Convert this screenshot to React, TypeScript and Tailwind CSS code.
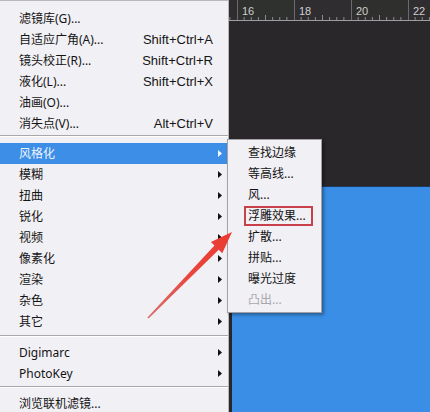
import { ReactNode } from 'react';

interface ItemProps {
  label: ReactNode;
  shortcut?: string;
  sub?: boolean;
  active?: boolean;
}

function Arrow({ light }: { light?: boolean }) {
  return (
    <svg width="4" height="7" viewBox="0 0 4 7">
      <polygon points="0,0 4,3.5 0,7" fill={light ? '#f4f8ff' : '#111'} />
    </svg>
  );
}

function MenuItem({ label, shortcut, sub, active }: ItemProps) {
  return (
    <div
      className={`flex h-[21px] items-center pl-[19px] pr-[6px] ${
        active ? 'bg-[#3c8ee6] text-[#eef4ff]' : 'text-[#141414]'
      }`}
    >
      <span className="flex-1 whitespace-nowrap">{label}</span>
      {shortcut && (
        <span className="whitespace-nowrap font-['Liberation_Sans',sans-serif] text-[13px]">{shortcut}</span>
      )}
      <span className="flex w-[9px] justify-end">{sub && <Arrow light={active} />}</span>
    </div>
  );
}

function Separator({ className }: { className: string }) {
  return (
    <div className={className}>
      <div className="h-px bg-[#a9a7ab]" />
      <div className="h-px bg-white" />
    </div>
  );
}

function Ruler() {
  const majors = [8, 65, 122, 179];
  const labels = ['16', '18', '20', '22'];
  const ticks: number[] = [];
  for (let i = -8; i < 34; i++) ticks.push(8 + i * 7.125);
  return (
    <svg width="201" height="21" viewBox="0 0 201 21" className="block">
      <rect width="201" height="21" fill="#302d31" />
      <rect x="8" width="57" height="19" fill="#2e312e" />
      <rect x="122" width="57" height="19" fill="#2f302e" />
      {ticks.map((x, i) => {
        const k = ((i % 8) + 8) % 8;
        const h = k === 0 ? 0 : k === 4 ? 5 : 3;
        return h ? <line key={i} x1={x} x2={x} y1={20 - h} y2={20} stroke="#8d8a8f" strokeWidth="1" /> : null;
      })}
      {majors.map((x, i) => (
        <g key={x}>
          <line x1={x + 0.5} x2={x + 0.5} y1="0" y2="20" stroke="#6d6a6f" strokeWidth="1" />
          <text x={x + 5} y="15" fontSize="11" fill="#cfcfcf" fontFamily="Liberation Sans, sans-serif">
            {labels[i]}
          </text>
        </g>
      ))}
      <line x1="0" x2="201" y1="20.5" y2="20.5" stroke="#a09da2" strokeWidth="1" />
    </svg>
  );
}

const subItems = ['查找边缘', '等高线...', '风...', '浮雕效果...', '扩散...', '拼贴...', '曝光过度', '凸出...'];

export default function App() {
  return (
    <div className="relative flex h-[412px] w-[430px] overflow-hidden font-['Noto_Sans','Noto_Sans_CJK_SC',sans-serif] text-[12px]">
      <div className="w-[229px] shrink-0 border-r border-t border-[#b9b7bb] bg-[#f1f0f4] pt-[7px]">
        <MenuItem label="滤镜库(G)..." />
        <MenuItem label="自适应广角(A)..." shortcut="Shift+Ctrl+A" />
        <MenuItem label="镜头校正(R)..." shortcut="Shift+Ctrl+R" />
        <MenuItem label="液化(L)..." shortcut="Shift+Ctrl+X" />
        <MenuItem label="油画(O)..." />
        <MenuItem label="消失点(V)..." shortcut="Alt+Ctrl+V" />
        <Separator className="pt-px pb-[6px]" />
        <MenuItem label="风格化" sub active />
        <MenuItem label="模糊" sub />
        <MenuItem label="扭曲" sub />
        <MenuItem label="锐化" sub />
        <MenuItem label="视频" sub />
        <MenuItem label="像素化" sub />
        <MenuItem label="渲染" sub />
        <MenuItem label="杂色" sub />
        <MenuItem label="其它" sub />
        <Separator className="pt-[3px] pb-[5px]" />
        <MenuItem label="Digimarc" sub />
        <MenuItem label="PhotoKey" sub />
        <Separator className="pt-[2px] pb-[5px]" />
        <MenuItem label="浏览联机滤镜..." />
      </div>

      <div className="flex flex-1 flex-col bg-[#2a272a]">
        <Ruler />
        <div className="h-[165px]" />
        <div className="ml-[3px] flex-1 border-t border-[#1d3b5e] bg-[#3a8ee6]" />
      </div>

      <div className="absolute left-[227px] top-[139px] w-[95px] border border-[#a3a1a5] bg-[#f1f0f4] py-[2px] shadow-[2px_2px_3px_rgba(0,0,0,0.35)]">
        {subItems.map((s, i) => (
          <div key={s} className="flex h-[21px] items-center pl-[20px]">
            {i === 3 ? (
              <span className="-ml-[4px] flex h-[20px] w-[69px] items-center border-2 border-[#c8404a] pl-[2px] text-[#141414] whitespace-nowrap">
                {s}
              </span>
            ) : (
              <span className={`whitespace-nowrap ${i === 7 ? 'text-[#a9a7ab]' : 'text-[#141414]'}`}>{s}</span>
            )}
          </div>
        ))}
      </div>

      <svg className="pointer-events-none absolute left-0 top-0" width="430" height="412" viewBox="0 0 430 412">
        <defs>
          <linearGradient id="arr" x1="148" y1="318" x2="232" y2="232" gradientUnits="userSpaceOnUse">
            <stop offset="0" stopColor="#d9706e" />
            <stop offset="0.5" stopColor="#e8463f" />
            <stop offset="1" stopColor="#ea3a30" />
          </linearGradient>
        </defs>
        <polygon
          points="147.4,317.4 214.5,245.6 210.9,242.1 232,232 222.3,253.3 218.7,249.8 148.6,318.6"
          fill="url(#arr)"
        />
      </svg>
    </div>
  );
}
